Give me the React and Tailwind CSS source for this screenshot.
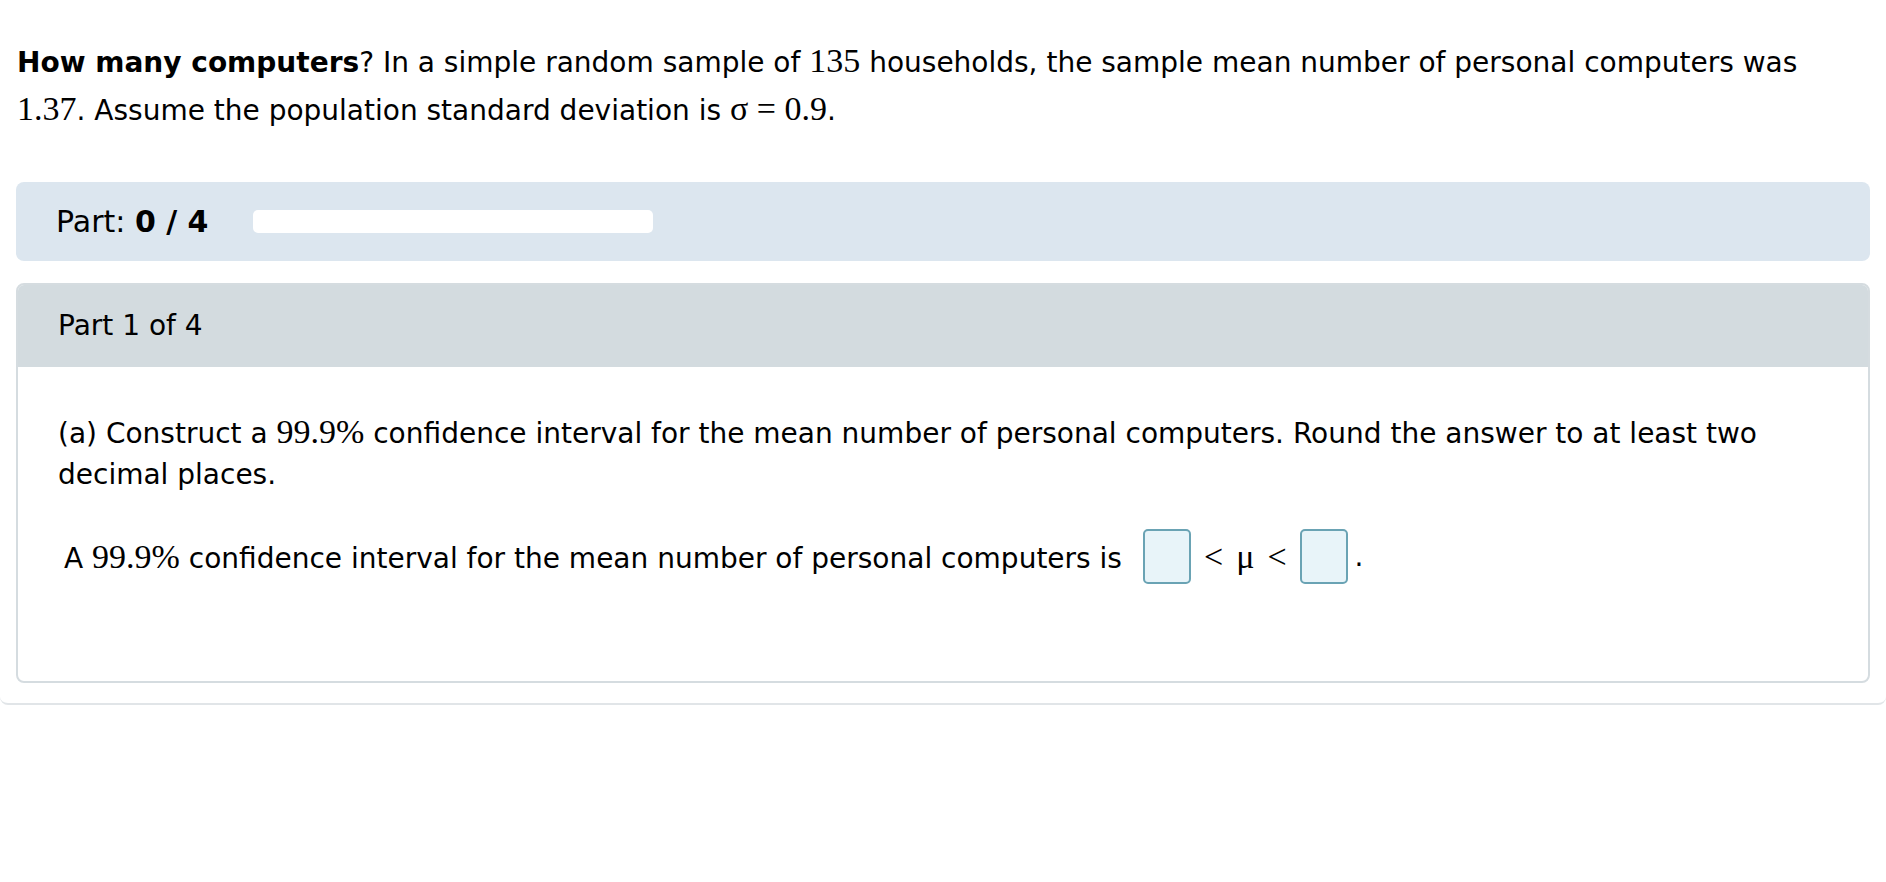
import React from 'react'

const sans = "font-['DejaVu_Sans','Verdana',sans-serif]"
const serif = "font-['Liberation_Serif','Times_New_Roman',serif]"

const Num = ({ children }) => (
  <span className={`${serif} text-[34px]`}>{children}</span>
)

const AnswerBox = () => (
  <span className="inline-block w-[48px] h-[55px] rounded-[5px] border-2 border-[#6aa3b4] bg-[#e8f4f9]"></span>
)

export default function App() {
  return (
    <div className={`${sans} bg-white min-h-screen text-black`}>
      <div className="border-b-2 border-[#e1e5e8] rounded-b-[8px] pb-[20px]">
        <p className="pl-[17px] pt-[38px] pr-[20px] text-[28px] leading-[46px]">
          <b>How many computers</b>? In a simple random sample of <Num>135</Num> households, the sample mean number of personal computers was
          <br />
          <Num>1.37</Num>. Assume the population standard deviation is <Num>σ = 0.9</Num>.
        </p>

        <div className="mx-[16px] mt-[48px] h-[79px] rounded-[8px] bg-[#dce6ef] flex items-center pl-[40px]">
          <span className="text-[30px]">Part: <b>0 / 4</b></span>
          <div className="ml-[45px] w-[400px] h-[23px] rounded-[5px] bg-white"></div>
        </div>

        <div className="mx-[16px] mt-[22px] h-[400px] rounded-[8px] border-2 border-[#d5dce0] overflow-hidden flex flex-col">
          <div className="h-[82px] bg-[#d3dbdf] flex items-center pl-[40px] text-[28px]">
            Part 1 of 4
          </div>
          <div className="pl-[40px] pr-[40px] pt-[44px] text-[28px]">
            <p className="leading-[41px]">
              (a) Construct a <Num>99.9%</Num> confidence interval for the mean number of personal computers. Round the answer to at least two
              <br />
              decimal places.
            </p>
            <div className="mt-[34px] pl-[6px] flex items-center gap-[13px]">
              <span className="mr-[8px]">A <Num>99.9%</Num> confidence interval for the mean number of personal computers is</span>
              <AnswerBox />
              <span className={`${serif} text-[34px]`}>&lt;</span>
              <span className={`${serif} text-[34px]`}>μ</span>
              <span className={`${serif} text-[34px]`}>&lt;</span>
              <AnswerBox />
              <span className="-ml-[6px]">.</span>
            </div>
          </div>
        </div>
      </div>
    </div>
  )
}
